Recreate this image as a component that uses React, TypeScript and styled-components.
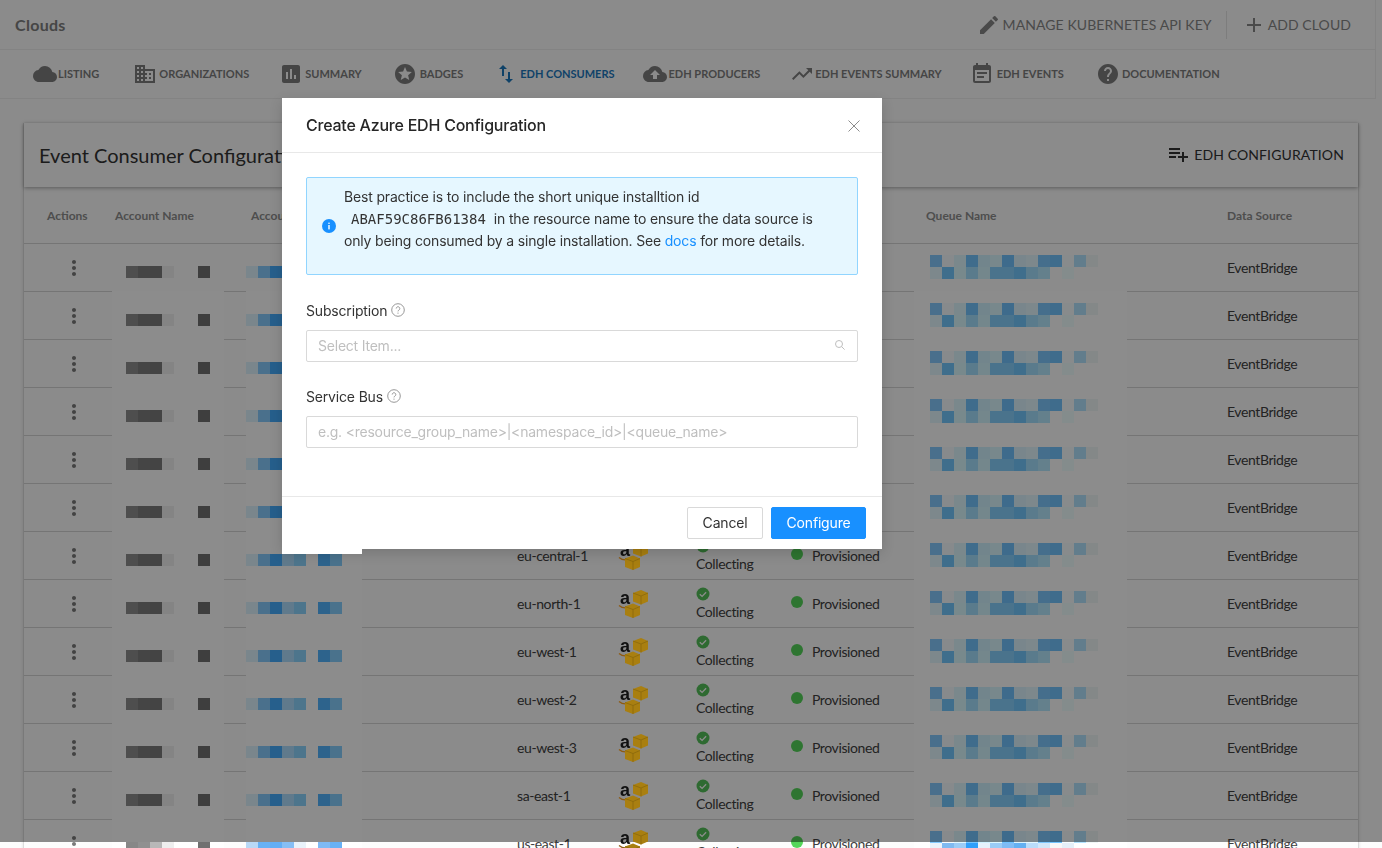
import { ComponentType } from 'react';
import styled, { createGlobalStyle } from 'styled-components';
import {
  MdAdd,
  MdAssessment,
  MdBusiness,
  MdCloud,
  MdCloudUpload,
  MdEdit,
  MdEventNote,
  MdHelp,
  MdImportExport,
  MdMoreVert,
  MdPlaylistAdd,
  MdStars,
  MdTrendingUp,
} from 'react-icons/md';

type NavEntry = {
  label: string;
  icon: ComponentType<{ size?: number }>;
  lead: number;
  gap: number;
  active?: boolean;
};

const NAV_ITEMS: NavEntry[] = [
  { label: 'LISTING', icon: MdCloud, lead: 33, gap: 1 },
  { label: 'ORGANIZATIONS', icon: MdBusiness, lead: 34, gap: 2 },
  { label: 'SUMMARY', icon: MdAssessment, lead: 30, gap: 2 },
  { label: 'BADGES', icon: MdStars, lead: 31, gap: 3 },
  { label: 'EDH CONSUMERS', icon: MdImportExport, lead: 31, gap: 2, active: true },
  { label: 'EDH PRODUCERS', icon: MdCloudUpload, lead: 28, gap: 2 },
  { label: 'EDH EVENTS SUMMARY', icon: MdTrendingUp, lead: 30, gap: 1 },
  { label: 'EDH EVENTS', icon: MdEventNote, lead: 28, gap: 3 },
  { label: 'DOCUMENTATION', icon: MdHelp, lead: 32, gap: 2 },
];

// rows behind the modal only show their masked cells
const REGIONS: (string | null)[] = [
  null,
  null,
  null,
  null,
  null,
  null,
  'eu-central-1',
  'eu-north-1',
  'eu-west-1',
  'eu-west-2',
  'eu-west-3',
  'sa-east-1',
  'us-east-1',
];

const NAME_CELLS = ['#8e8e8e', '#7e7e7e', '#7c7c7c', '#f0f0f0', null, null, '#717171'];
const ID_CELLS = ['#dff5ff', '#87ccff', '#45adff', '#afdeff', '#8cd5ff', null, '#52b4ff', '#87cfff'];
const QUEUE_TOP = [
  '#85cbff', '#f6fcff', '#dff7ff', '#73c5ff', '#d0f2ff', '#dbf7ff', '#71c3ff',
  '#dcf4ff', '#e3f7ff', '#7ec8ff', '#74c5ff', '#f7fdff', '#b2e3ff', '#f0f7f7',
];
const QUEUE_BOTTOM = [
  '#e3f7ff', '#73c8ff', '#dbf9ff', '#a4e0ff', '#d3f6ff', '#87d1ff', '#87d1ff',
  '#73c8ff', '#a4e0ff', '#b6e9ff', null, '#f0ffff', null, null,
];

// the last row sits partly under the page edge and was masked differently
const LAST_NAME_CELLS = ['#878787', '#909090', '#b8b8b8', '#eeeeee', null, null, '#707070'];
const LAST_ID_CELLS = ['#b9d9f7', '#68b1f4', '#63aef5', '#86bef5', '#e9f2fa', null, '#7fbaf5', '#68b1f5'];
const LAST_QUEUE_BOTTOM = [
  '#eaf3fb', '#7fbaf1', '#9bccf6', '#2f9ffa', '#e6f2fc', '#9accf6', '#7fbcf5',
  '#64b0f2', '#b9dcfa', '#d2e7f9', '#f8f8f8', '#e6f0f9', null, null,
];

const GlobalStyle = createGlobalStyle`
  html, body {
    margin: 0;
    height: 100%;
    overflow: hidden;
    background: #fff;
  }
  * {
    box-sizing: border-box;
  }
`;

const Page = styled.div`
  width: 1382px;
  height: 848px;
  padding-right: 6px;
  overflow: hidden;
  background: #fdfdfd;
  font-family: Lato, 'Liberation Sans', sans-serif;
  color: #3f3f3f;
`;

const TopBar = styled.div`
  height: 50px;
  display: flex;
  align-items: center;
  justify-content: space-between;
  padding: 0 24px 0 15px;
  border-bottom: 1px solid #eee;
  border-right: 1px solid #eee;
`;

const PageTitle = styled.div`
  font-size: 16px;
  font-weight: 700;
  letter-spacing: 0.3px;
  color: #808080;
`;

const TopActions = styled.div`
  display: flex;
  align-items: center;
`;

const TopAction = styled.div`
  display: flex;
  align-items: center;
  gap: 2px;
  height: 28px;
  font-size: 14px;
  letter-spacing: 0.08px;
  color: #888;

  & + & {
    margin-left: 14px;
    padding-left: 15px;
    border-left: 1px solid #e4e4e4;
  }
`;

const NavBar = styled.nav`
  height: 49px;
  display: flex;
  align-items: center;
  border-bottom: 1px solid #eee;
  border-right: 1px solid #eee;
`;

const NavItem = styled.div<{ $active?: boolean; $gap: number; $lead: number }>`
  display: flex;
  align-items: center;
  gap: ${(p) => p.$gap}px;
  margin-left: ${(p) => p.$lead}px;
  font-size: 11px;
  font-weight: 700;
  color: ${(p) => (p.$active ? '#1c78bd' : '#7e7e7e')};
  white-space: nowrap;
  span {
    padding-bottom: 2px;
  }
`;

const Card = styled.section`
  width: 1336px;
  margin: 24px 0 0 23px;
  border-left: 1px solid #dcdcdc;
  border-right: 1px solid #dcdcdc;
  box-shadow: 0 1px 3px rgba(0, 0, 0, 0.12);
`;

const CardHeader = styled.header`
  height: 64px;
  display: flex;
  align-items: center;
  justify-content: space-between;
  padding: 0 14px 0 15px;
  box-shadow: 0 1px 4px rgba(0, 0, 0, 0.35);
  position: relative;
`;

const CardTitle = styled.h2`
  margin: 0;
  font-size: 20px;
  font-weight: 400;
  color: #333;
`;

const CardAction = styled.div`
  display: flex;
  align-items: center;
  gap: 4px;
  padding-bottom: 2px;
  font-size: 14px;
  letter-spacing: 0.12px;
  color: #333;
`;

const Row = styled.div<{ $head?: boolean }>`
  height: ${(p) => (p.$head ? 57 : 48)}px;
  display: grid;
  grid-template-columns: 68px 136px 266px 103px 76px 95px 135px 301px 1fr;
  align-items: center;
  padding-left: 23px;
  border-bottom: 1px solid #d6d6d6;
  font-size: 14px;
  letter-spacing: -0.4px;
  color: #404040;
`;

const HeadCell = styled.div`
  font-size: 12px;
  font-weight: 700;
  letter-spacing: 0;
  color: #8e8e8e;
  padding-top: 1px;
`;

const ActionCell = styled.div`
  display: flex;
  margin-left: 15px;
  color: #7a7a7a;
`;

const Patch = styled.div<{ $covers: boolean; $left: number; $width: number; $top: number; $pad: number }>`
  align-self: stretch;
  width: ${(p) => p.$width}px;
  margin-left: ${(p) => p.$left}px;
  margin-top: ${(p) => (p.$covers ? -1 : 0)}px;
  padding: ${(p) => (p.$covers ? p.$top : p.$top - 1)}px 0 0 ${(p) => p.$pad}px;
  background: ${(p) => (p.$covers ? '#fff' : 'transparent')};
`;

const MosaicGrid = styled.svg`
  display: block;
`;

const CollectCell = styled.div`
  display: flex;
  flex-direction: column;
  gap: 2px;
  margin-top: 1px;
  line-height: 18px;
`;

const StateCell = styled.div`
  display: flex;
  align-items: center;
  gap: 9px;
`;

const Dot = styled.span`
  width: 12px;
  height: 12px;
  margin-top: -4px;
  border-radius: 50%;
  background: #55d65a;
`;

const AwsMark = styled.svg`
  display: block;
  position: relative;
  z-index: 11;
  margin-left: -1px;
  overflow: visible;
`;

const Mask = styled.div`
  position: fixed;
  top: 0;
  left: 0;
  right: 0;
  height: 842px;
  background: rgba(0, 0, 0, 0.45);
  z-index: 10;
`;

const Modal = styled.div`
  position: fixed;
  top: 98px;
  left: 282px;
  width: 600px;
  z-index: 20;
  background: #fff;
  box-shadow: 0 4px 12px rgba(0, 0, 0, 0.15);
  font-family: Inter, 'Noto Sans', sans-serif;
  font-size: 14px;
  letter-spacing: -0.17px;
  color: #333;

  &::after {
    content: '';
    position: absolute;
    top: 100%;
    left: 0;
    width: 80px;
    height: 5px;
    background: #fff;
  }
`;

const ModalHeader = styled.header`
  height: 55px;
  display: flex;
  align-items: center;
  justify-content: space-between;
  padding: 0 22px 0 24px;
  border-bottom: 1px solid #e8e8e8;
`;

const ModalTitle = styled.h3`
  margin: 0;
  font-size: 16px;
  font-weight: 500;
  letter-spacing: -0.23px;
  color: #262626;
`;

const CloseIcon = styled.svg`
  margin-top: 1px;
  color: #8c8c8c;
`;

const ModalBody = styled.div`
  padding: 24px 24px 48px;
  border-bottom: 1px solid #e8e8e8;
`;

const Alert = styled.div`
  height: 98px;
  display: flex;
  align-items: center;
  gap: 8px;
  padding: 0 15px;
  margin-bottom: 25px;
  background: #e6f7ff;
  border: 1px solid #91d5ff;
  border-radius: 2px;
`;

const AlertText = styled.div`
  line-height: 22px;
  margin-bottom: 14px;
  color: #333;
`;

const Code = styled.code`
  margin: 0 8px 0 7px;
  font-family: 'DejaVu Sans Mono', 'Liberation Mono', monospace;
  font-size: 14px;
  letter-spacing: 0;
`;

const DocLink = styled.a`
  color: #1890ff;
  text-decoration: none;
`;

const FieldLabel = styled.label`
  display: flex;
  align-items: center;
  gap: 4px;
  height: 22px;
  margin: 0 0 8px;
  padding-bottom: 2px;
  color: #333;
`;

const InputBox = styled.div`
  height: 32px;
  display: flex;
  align-items: center;
  justify-content: space-between;
  padding: 0 11px 2px;
  margin-bottom: 24px;
  border: 1px solid #d9d9d9;
  border-radius: 2px;
  letter-spacing: -0.22px;
  color: #bfbfbf;

  &:last-child {
    margin-bottom: 0;
  }
`;

const ModalFooter = styled.footer`
  display: flex;
  justify-content: flex-end;
  gap: 8px;
  padding: 10px 16px;
`;

const Button = styled.button<{ $primary?: boolean }>`
  height: 32px;
  padding: 0 14.5px 2px;
  border: 1px solid ${(p) => (p.$primary ? '#1890ff' : '#d9d9d9')};
  border-radius: 2px;
  background: ${(p) => (p.$primary ? '#1890ff' : '#fff')};
  color: ${(p) => (p.$primary ? '#fff' : '#333')};
  font-family: inherit;
  font-size: 14px;
  letter-spacing: inherit;
`;

const Mosaic = ({ rows }: { rows: (string | null)[][] }) => (
  <MosaicGrid width={rows[0].length * 12} height={rows.length * 12}>
    {rows.map((cells, y) =>
      cells.map((fill, x) => (fill ? <rect key={`${x}-${y}`} x={x * 12} y={y * 12} width={12} height={12} fill={fill} /> : null))
    )}
  </MosaicGrid>
);

const Cube = ({ x, y }: { x: number; y: number }) => (
  <g transform={`translate(${x} ${y})`}>
    <path d="M0 3l8-3 7 3v8.500l-7 3-8-3z" fill="#a97f10" />
    <path d="M0 3l8 3 7-3" fill="none" stroke="#8a680c" strokeWidth="0.800" />
    <path d="M8 6v8.500" stroke="#8a680c" strokeWidth="0.800" />
  </g>
);

const AwsIcon = () => (
  <AwsMark width="30" height="28" viewBox="0 0 30 28">
    <text x="1" y="14" fontFamily="'Liberation Sans', sans-serif" fontSize="18" fontWeight="700" fill="#111">
      a
    </text>
    <path d="M0 15.500c3 2.500 7 3 10.500 1.500" fill="none" stroke="#8f5a10" strokeWidth="1.300" />
    <Cube x={14} y={0} />
    <Cube x={6} y={13.500} />
  </AwsMark>
);

const CheckBadge = () => (
  <svg width="14" height="14" viewBox="0 0 14 14">
    <circle cx="7" cy="7" r="6.500" fill="#55c25a" />
    <path d="M3.800 7.200l2.300 2.200 4-4.200" fill="none" stroke="#fff" strokeWidth="1.300" />
  </svg>
);

const HelpIcon = () => (
  <svg width="14" height="14" viewBox="0 0 14 14">
    <circle cx="7" cy="7" r="6.300" fill="none" stroke="#8c8c8c" strokeWidth="0.900" />
    <path d="M5.200 5.500a1.800 1.800 0 1 1 2.700 1.600c-.6.300-.9.700-.9 1.300" fill="none" stroke="#8c8c8c" strokeWidth="0.900" />
    <circle cx="7" cy="10.100" r="0.600" fill="#8c8c8c" />
  </svg>
);

const InfoIcon = () => (
  <svg width="14" height="14" viewBox="0 0 14 14">
    <circle cx="7" cy="7" r="7" fill="#1890ff" />
    <rect x="6.300" y="6" width="1.400" height="4.400" fill="#fff" />
    <circle cx="7" cy="4.300" r="0.800" fill="#fff" />
  </svg>
);

const SearchIcon = () => (
  <svg width="12" height="12" viewBox="0 0 12 12">
    <circle cx="5" cy="5" r="3.500" fill="none" stroke="#bfbfbf" strokeWidth="1" />
    <path d="M7.600 7.600l3 3" stroke="#bfbfbf" strokeWidth="1" />
  </svg>
);

const App = (): JSX.Element => {
  return (
    <Page>
      <GlobalStyle />
      <TopBar>
        <PageTitle>Clouds</PageTitle>
        <TopActions>
          <TopAction>
            <MdEdit size={24} />
            MANAGE KUBERNETES API KEY
          </TopAction>
          <TopAction>
            <MdAdd size={24} />
            ADD CLOUD
          </TopAction>
        </TopActions>
      </TopBar>
      <NavBar>
        {NAV_ITEMS.map((item) => (
          <NavItem key={item.label} $active={item.active} $gap={item.gap} $lead={item.lead}>
            <item.icon size={24} />
            <span>{item.label}</span>
          </NavItem>
        ))}
      </NavBar>
      <Card>
        <CardHeader>
          <CardTitle>Event Consumer Configurations</CardTitle>
          <CardAction>
            <MdPlaylistAdd size={24} />
            EDH CONFIGURATION
          </CardAction>
        </CardHeader>
        <Row $head>
          <HeadCell>Actions</HeadCell>
          <HeadCell>Account Name</HeadCell>
          <HeadCell>Account ID</HeadCell>
          <div />
          <div />
          <div />
          <div />
          <HeadCell>Queue Name</HeadCell>
          <HeadCell>Data Source</HeadCell>
        </Row>
        {REGIONS.map((region, idx) => {
          const last = idx === REGIONS.length - 1;
          return (
            <Row key={idx}>
              <ActionCell>
                <MdMoreVert size={24} />
              </ActionCell>
              <Patch $covers={idx > 0} $left={-3} $width={112} $top={23} $pad={14}>
                <Mosaic rows={[last ? LAST_NAME_CELLS : NAME_CELLS]} />
              </Patch>
              <Patch $covers={idx > 0} $left={-5} $width={116} $top={23} $pad={0}>
                <Mosaic rows={[last ? LAST_ID_CELLS : ID_CELLS]} />
              </Patch>
              <div>{region}</div>
              <div>{region && <AwsIcon />}</div>
              {region ? (
                <CollectCell>
                  <CheckBadge />
                  Collecting
                </CollectCell>
              ) : (
                <div />
              )}
              {region ? (
                <StateCell>
                  <Dot />
                  Provisioned
                </StateCell>
              ) : (
                <div />
              )}
              <Patch $covers={idx > 0} $left={-12} $width={213} $top={12} $pad={16}>
                <Mosaic rows={[QUEUE_TOP, last ? LAST_QUEUE_BOTTOM : QUEUE_BOTTOM]} />
              </Patch>
              <div>EventBridge</div>
            </Row>
          );
        })}
      </Card>
      <Mask />
      <Modal>
        <ModalHeader>
          <ModalTitle>Create Azure EDH Configuration</ModalTitle>
          <CloseIcon width="12" height="12" viewBox="0 0 12 12">
            <path d="M.5.500l11 11M11.500.500l-11 11" stroke="currentColor" strokeWidth="1" fill="none" />
          </CloseIcon>
        </ModalHeader>
        <ModalBody>
          <Alert>
            <InfoIcon />
            <AlertText>
              Best practice is to include the short unique installtion id
              <br />
              <Code>ABAF59C86FB61384</Code>in the resource name to ensure the data source is
              <br />
              only being consumed by a single installation. See <DocLink>docs</DocLink> for more details.
            </AlertText>
          </Alert>
          <FieldLabel>
            Subscription
            <HelpIcon />
          </FieldLabel>
          <InputBox>
            Select Item...
            <SearchIcon />
          </InputBox>
          <FieldLabel>
            Service Bus
            <HelpIcon />
          </FieldLabel>
          <InputBox>{'e.g. <resource_group_name>|<namespace_id>|<queue_name>'}</InputBox>
        </ModalBody>
        <ModalFooter>
          <Button>Cancel</Button>
          <Button $primary>Configure</Button>
        </ModalFooter>
      </Modal>
    </Page>
  );
};

export default App;
